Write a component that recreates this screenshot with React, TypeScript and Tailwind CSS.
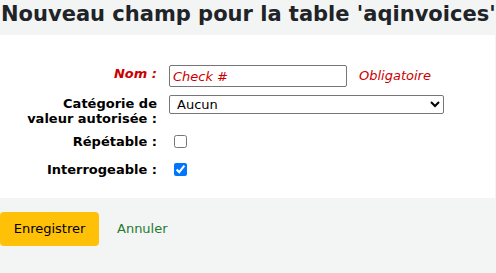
import React from "react";

const font = "font-['DejaVu_Sans',sans-serif]";

export default function App() {
  return (
    <div className={`${font} w-[496px] h-[273px] bg-[#f3f4f4] overflow-hidden`}>
      <h1 className="h-[35px] pl-[1px] pt-[1px] text-[21px] leading-[26px] font-bold text-[#202327] whitespace-nowrap">
        Nouveau champ pour la table 'aqinvoices'
      </h1>

      {/* Form panel */}
      <div className="w-[495px] h-[163px] bg-white pt-[30px] text-[13px] text-black">
        <div className="flex items-start">
          <label className="w-[157px] pt-[1px] text-right font-bold italic text-[#cc0000] leading-[16px]">
            Nom :
          </label>
          <input
            type="text"
            defaultValue="Check #"
            className="ml-[12px] w-[178px] h-[22px] border border-[#767676] rounded-[2px] px-[3px] italic text-[#cc0000] text-[13px] outline-none"
          />
          <span className="ml-[12px] pt-[3px] italic text-[#cc0000] leading-[16px]">Obligatoire</span>
        </div>

        <div className="flex items-start mt-[8px]">
          <label className="w-[157px] pt-[1px] text-right font-bold leading-[15px]">
            Catégorie de
            <br />
            valeur autorisée :
          </label>
          <select
            defaultValue="Aucun"
            className="ml-[12px] w-[275px] h-[19px] border border-[#767676] rounded-[2px] pl-[3px] text-[13px] leading-[15px] bg-white text-black"
          >
            <option>Aucun</option>
          </select>
        </div>

        <div className="flex items-center mt-[8px] h-[14px]">
          <label className="w-[157px] text-right font-bold leading-[15px]">Répétable :</label>
          <input type="checkbox" className="ml-[17px] w-[13px] h-[13px] m-0" />
        </div>

        <div className="flex items-center mt-[14px] h-[14px]">
          <label className="w-[157px] text-right font-bold leading-[15px]">Interrogeable :</label>
          <input type="checkbox" defaultChecked className="ml-[17px] w-[13px] h-[13px] m-0" />
        </div>
      </div>

      {/* Actions */}
      <div className="flex items-center mt-[14px]">
        <button
          type="button"
          className="w-[99px] h-[34px] rounded-[4px] bg-[#ffc107] text-[13px] text-black"
        >
          Enregistrer
        </button>
        <a href="#" className="ml-[18px] text-[13px] text-[#247a2f]">
          Annuler
        </a>
      </div>
    </div>
  );
}
